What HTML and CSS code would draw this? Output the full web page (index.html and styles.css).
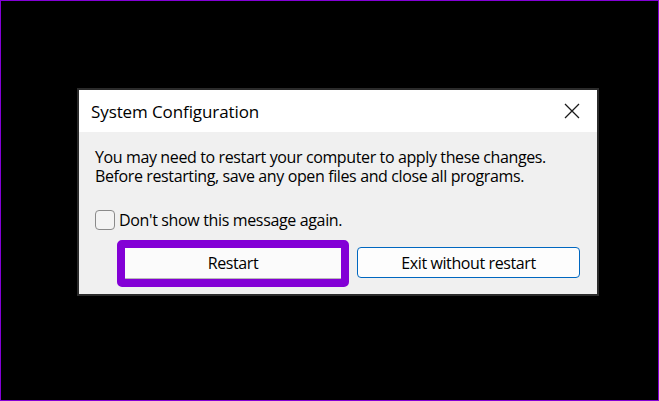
FILE: index.html
```html
<!DOCTYPE html>
<html>
<head>
<meta charset="utf-8">
<link rel="stylesheet" href="styles.css">
</head>
<body>
<div class="screen">
  <div class="dialog">
    <div class="titlebar">
      <span class="title">System Configuration</span>
      <svg class="close" width="16" height="16" viewBox="0 0 16 16"><path d="M1 1 L15 15 M15 1 L1 15" stroke="#1a1a1a" stroke-width="1.3" fill="none"/></svg>
    </div>
    <div class="content">
      <p class="message">You may need to restart your computer to apply these changes.<br>Before restarting, save any open files and close all programs.</p>
      <label class="check"><span class="box"></span><span>Don't show this message again.</span></label>
      <div class="actions">
        <div class="highlight"><button class="btn btn-restart">Restart</button></div>
        <button class="btn btn-exit">Exit without restart</button>
      </div>
    </div>
  </div>
</div>
</body>
</html>
```
FILE: styles.css
```css
html, body { margin: 0; padding: 0; }
body { background: #000; }
.screen {
  width: 659px; height: 401px; box-sizing: border-box;
  border: 1px solid #8300d6; background: #000;
  padding: 87px 0 0 76px;
  font-family: "Open Sans", "Noto Sans", sans-serif;
  color: #000;
}
.dialog {
  width: 522px; height: 208px; box-sizing: border-box;
  border: 2px solid #2b2b2b; background: #f0f0f0;
  display: flex; flex-direction: column;
}
.titlebar {
  height: 42px; flex: none; background: #fff;
  display: flex; align-items: center; justify-content: space-between;
  padding: 0 17px 0 12px;
}
.title { font-size: 17px; letter-spacing: -0.1px; }
.close { display: block; }
.content { padding: 16px 0 0 16px; display: flex; flex-direction: column; }
.message { margin: 0; font-size: 16px; line-height: 19px; letter-spacing: -0.38px; }
.check { display: flex; align-items: center; gap: 4px; margin-top: 23px; font-size: 16px; letter-spacing: -0.35px; }
.box {
  width: 20px; height: 20px; box-sizing: border-box;
  border: 1px solid #8a8a8a; border-radius: 4px; background: #f3f3f3;
}
.actions { display: flex; gap: 8px; margin: 9px 0 0 22px; align-items: flex-start; }
.highlight { border: 8px solid #8300d6; border-radius: 5px; }
.btn {
  font-family: inherit; font-size: 16px; color: #000; letter-spacing: -0.4px;
  height: 31px; padding: 0; margin: 0; box-sizing: border-box;
  display: flex; align-items: center; justify-content: center;
}
.btn-restart {
  width: 216px; background: #fbfbfb; border: none;
  border-bottom: 1px solid #b8b8b8; border-radius: 0;
}
.btn-exit {
  width: 223px; margin-top: 7px; background: #fdfdfd;
  border: 1px solid #0067c0; border-radius: 4px;
}
```
